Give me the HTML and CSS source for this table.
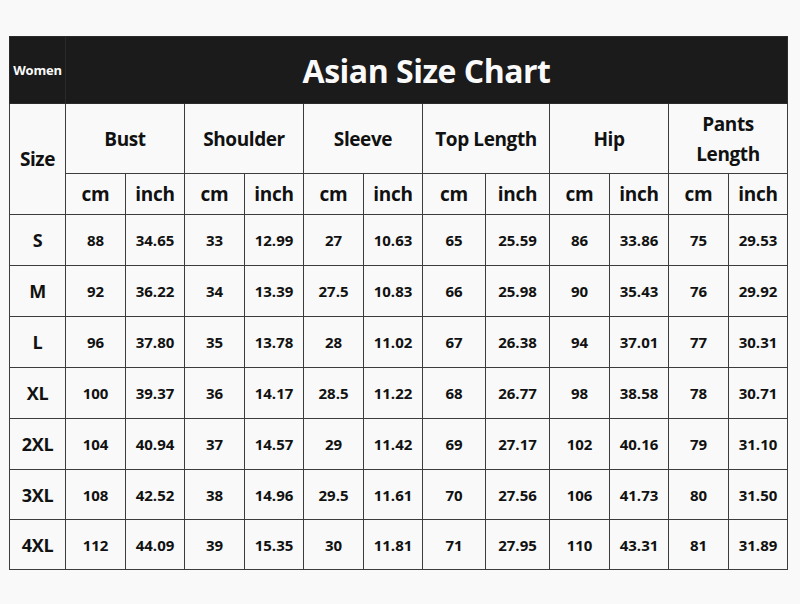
FILE: index.html
```html
<!DOCTYPE html>
<html>
<head>
<meta charset="utf-8">
<link rel="stylesheet" href="styles.css">
</head>
<body>
<div class="page">
<table class="chart">
<colgroup>
<col class="c-size">
<col class="c56"><col class="c55">
<col class="c56"><col class="c55">
<col class="c56"><col class="c55">
<col class="c59"><col class="c60">
<col class="c56"><col class="c55">
<col class="c56"><col class="c55">
</colgroup>
<thead>
<tr class="r-title">
<th class="women">Women</th>
<th class="title" colspan="12">Asian Size Chart</th>
</tr>
<tr class="r-head">
<th class="size-h" rowspan="2">Size</th>
<th colspan="2">Bust</th>
<th colspan="2">Shoulder</th>
<th colspan="2">Sleeve</th>
<th colspan="2">Top Length</th>
<th colspan="2">Hip</th>
<th colspan="2" class="two">Pants<br>Length</th>
</tr>
<tr class="r-unit">
<th>cm</th><th>inch</th>
<th>cm</th><th>inch</th>
<th>cm</th><th>inch</th>
<th>cm</th><th>inch</th>
<th>cm</th><th>inch</th>
<th>cm</th><th>inch</th>
</tr>
</thead>
<tbody>
<tr><th>S</th><td>88</td><td>34.65</td><td>33</td><td>12.99</td><td>27</td><td>10.63</td><td>65</td><td>25.59</td><td>86</td><td>33.86</td><td>75</td><td>29.53</td></tr>
<tr><th>M</th><td>92</td><td>36.22</td><td>34</td><td>13.39</td><td>27.5</td><td>10.83</td><td>66</td><td>25.98</td><td>90</td><td>35.43</td><td>76</td><td>29.92</td></tr>
<tr><th>L</th><td>96</td><td>37.80</td><td>35</td><td>13.78</td><td>28</td><td>11.02</td><td>67</td><td>26.38</td><td>94</td><td>37.01</td><td>77</td><td>30.31</td></tr>
<tr><th>XL</th><td>100</td><td>39.37</td><td>36</td><td>14.17</td><td>28.5</td><td>11.22</td><td>68</td><td>26.77</td><td>98</td><td>38.58</td><td>78</td><td>30.71</td></tr>
<tr><th>2XL</th><td>104</td><td>40.94</td><td>37</td><td>14.57</td><td>29</td><td>11.42</td><td>69</td><td>27.17</td><td>102</td><td>40.16</td><td>79</td><td>31.10</td></tr>
<tr class="short"><th>3XL</th><td>108</td><td>42.52</td><td>38</td><td>14.96</td><td>29.5</td><td>11.61</td><td>70</td><td>27.56</td><td>106</td><td>41.73</td><td>80</td><td>31.50</td></tr>
<tr class="short"><th>4XL</th><td>112</td><td>44.09</td><td>39</td><td>15.35</td><td>30</td><td>11.81</td><td>71</td><td>27.95</td><td>110</td><td>43.31</td><td>81</td><td>31.89</td></tr>
</tbody>
</table>
</div>
</body>
</html>
```
FILE: styles.css
```css
html, body {
  margin: 0;
  padding: 0;
  background: #f8f9f8;
}
.page {
  width: 800px;
  height: 604px;
  padding: 36px 0 0 9px;
  box-sizing: border-box;
  font-family: "Open Sans", "Liberation Sans", sans-serif;
  color: #111;
}
.chart {
  border-collapse: collapse;
  table-layout: fixed;
  width: 779px;
}
.chart th, .chart td {
  border: 1px solid #3c3c3c;
  padding: 0;
  text-align: center;
  vertical-align: middle;
  font-weight: 700;
  overflow: hidden;
  white-space: nowrap;
}
.c-size { width: 56px; }
.c56 { width: 60px; }
.c55 { width: 59px; }
.c59 { width: 63px; }
.c60 { width: 64px; }
.r-title { height: 67px; }
.r-title th {
  background: #1b1b1b;
  color: #fafafa;
  border-color: #2a2a2a;
}
.women {
  font-size: 13px;
  letter-spacing: -0.2px;
}
.title {
  font-size: 32px;
  letter-spacing: -0.5px;
  padding-bottom: 2px;
}
.r-head { height: 70px; }
.r-head th {
  font-size: 19px;
  letter-spacing: -0.4px;
}
.r-head .two {
  line-height: 30px;
}
.r-unit { height: 41px; }
.r-unit th {
  font-size: 19px;
  letter-spacing: -0.3px;
}
tbody tr { height: 51px; }
tbody tr.short { height: 50px; }
tbody th {
  font-size: 18px;
  letter-spacing: -0.3px;
}
tbody td {
  font-size: 15px;
  letter-spacing: 0;
}
```
